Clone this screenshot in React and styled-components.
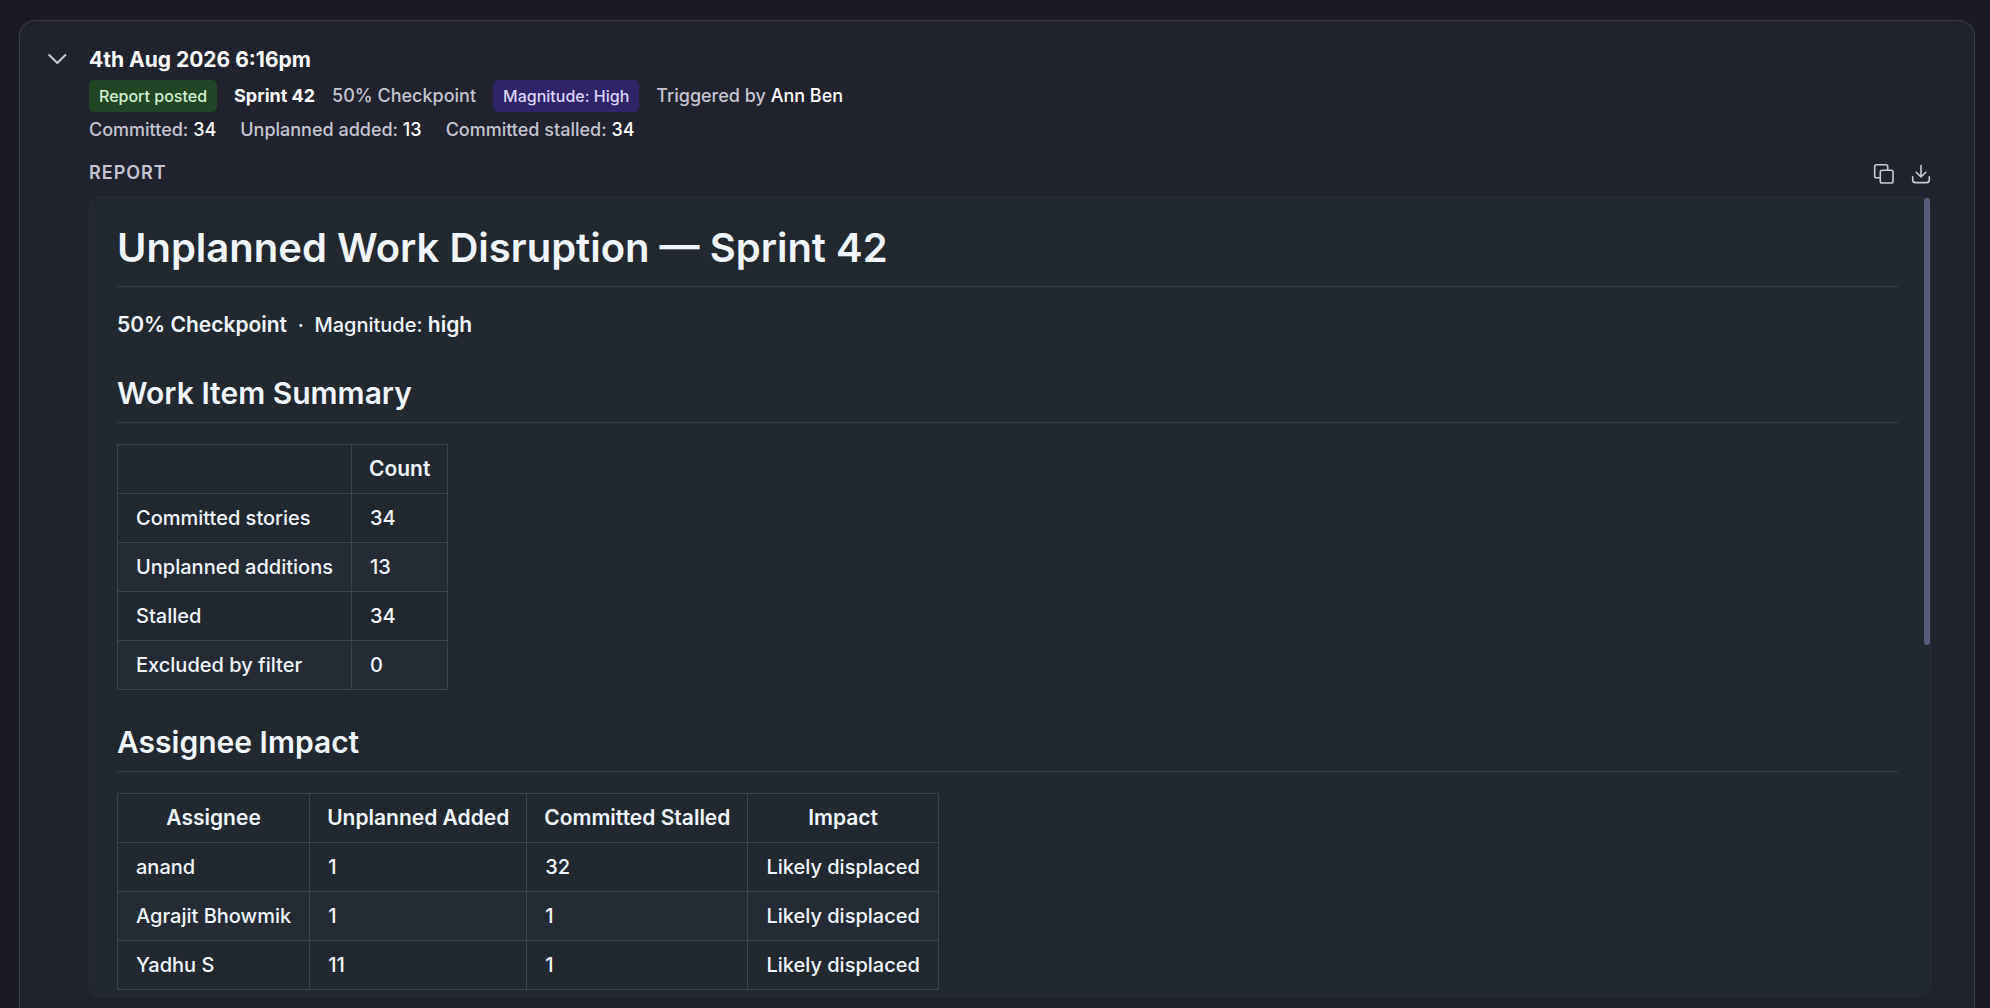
import React from 'react';
import styled, { createGlobalStyle } from 'styled-components';

const GlobalStyle = createGlobalStyle`
    * {
        box-sizing: border-box;
    }

    body {
        margin: 0;
        background-color: #1b1a23;
        font-family: Inter, sans-serif;
    }
`

const Page = styled.main`
    height: 100vh;
    overflow: hidden;
    padding: 20px 15px 0 19px;
`

const Card = styled.section`
    display: flex;
    align-items: flex-start;
    gap: 20px;
    min-height: 100%;
    padding: 24px 43px 24px 25px;
    border: 1px solid #3a3d52;
    border-bottom: none;
    border-radius: 16px 16px 0 0;
    background-color: #20222d;
`

const IconButton = styled.button`
    display: flex;
    padding: 0;
    border: none;
    background: none;
    color: #cbcad8;
    cursor: pointer;
`

const ToggleButton = styled(IconButton)`
    padding-top: 2px;
`

const Content = styled.div`
    flex: 1;
    min-width: 0;
`

const Title = styled.h3`
    margin: 0;
    color: #ffffff;
    font-size: 21px;
    font-weight: 650;
    line-height: 30px;
`

const MetaRow = styled.div`
    display: flex;
    align-items: center;
    gap: 17px;
    margin-top: 5px;
    color: #c6c6d2;
    font-size: 18px;
    font-weight: 450;
    line-height: 32px;
`

const Badge = styled.span`
    padding: 0 10px;
    border-radius: 5px;
    background-color: ${({ $tone }) => ($tone === 'green' ? '#224624' : '#2f2467')};
    color: ${({ $tone }) => ($tone === 'green' ? '#d3f2d5' : '#dcd5fb')};
    font-size: 16px;
`

const Value = styled.span`
    color: #ffffff;
    font-weight: ${({ $bold }) => ($bold ? 650 : 500)};
`

const StatRow = styled.div`
    display: flex;
    gap: 24px;
    margin-top: 1px;
    color: #c6c6d2;
    font-size: 18px;
    font-weight: 450;
    line-height: 34px;
`

const ReportHeader = styled.div`
    display: flex;
    align-items: flex-end;
    justify-content: space-between;
    margin: 13px 0 12px;
`

const ReportLabel = styled.h4`
    margin: 0;
    color: #c6c6d2;
    font-size: 18px;
    font-weight: 600;
    letter-spacing: 1px;
    line-height: 25px;
`

const Actions = styled.div`
    display: flex;
    gap: 16px;
`

const Report = styled.article`
    position: relative;
    padding: 25px 32px 6px 27px;
    border: 1px solid #292d38;
    border-radius: 10px;
    background-color: #22282f;
    color: #f0f6fc;
    font-size: 20px;
    font-weight: 450;
    line-height: 32px;
`

const ScrollThumb = styled.div`
    position: absolute;
    top: 0;
    right: 0;
    width: 6px;
    height: 56%;
    border-radius: 3px;
    background-color: #595b7c;
`

const Heading1 = styled.h1`
    margin: 0 0 22px;
    padding-bottom: 13px;
    border-bottom: 1px solid #363e48;
    font-size: 40px;
    font-weight: 625;
    line-height: 50px;
`

const Heading2 = styled.h2`
    margin: 33px 0 21px;
    padding-bottom: 10px;
    border-bottom: 1px solid #363e48;
    font-size: 30px;
    font-weight: 625;
    line-height: 38px;
`

const Paragraph = styled.p`
    margin: 0;
    white-space: pre-wrap;

    strong {
        font-size: 21px;
        font-weight: 600;
    }
`

const Table = styled.table`
    border-collapse: collapse;

    th,
    td {
        padding: 8px 18px;
        border: 1px solid #3d444d;
        text-align: left;
    }

    th {
        padding: 8px 17px;
        font-size: 21px;
        font-weight: 600;
        text-align: center;
    }

    tbody tr:nth-child(even) {
        background-color: #252b35;
    }
`

const summary = {
    columns: ['', 'Count'],
    rows: [
        ['Committed stories', '34'],
        ['Unplanned additions', '13'],
        ['Stalled', '34'],
        ['Excluded by filter', '0'],
    ],
}

const impact = {
    columns: ['Assignee', 'Unplanned Added', 'Committed Stalled', 'Impact'],
    rows: [
        ['anand', '1', '32', 'Likely displaced'],
        ['Agrajit Bhowmik', '1', '1', 'Likely displaced'],
        ['Yadhu S', '11', '1', 'Likely displaced'],
    ],
}

const ChevronIcon = () => (
    <svg width="24" height="24" viewBox="0 0 24 24" fill="none" stroke="currentColor" strokeWidth="2" strokeLinecap="round" strokeLinejoin="round">
        <path d="M4.200 8l8.100 8L20.400 8" />
    </svg>
)

const CopyIcon = () => (
    <svg width="22" height="22" viewBox="0 0 22 22" fill="none" stroke="currentColor" strokeWidth="1.600" strokeLinejoin="round">
        <rect x="7.300" y="7.300" width="12.700" height="12.700" rx="1.800" />
        <path d="M7.300 14.700H3.500a1.800 1.800 0 0 1-1.800-1.800V3.500a1.800 1.800 0 0 1 1.800-1.800h9.400a1.800 1.800 0 0 1 1.800 1.800v3.800" />
    </svg>
)

const DownloadIcon = () => (
    <svg width="20" height="22" viewBox="0 0 20 22" fill="none" stroke="currentColor" strokeWidth="1.600" strokeLinecap="round" strokeLinejoin="round">
        <path d="M10 2.500v11.500M5.200 9.300L10 14l4.800-4.700" />
        <path d="M1.700 13.700v3.300a2.600 2.600 0 0 0 2.600 2.600h11.400a2.600 2.600 0 0 0 2.600-2.600v-3.300" />
    </svg>
)

const DataTable = ({ columns, rows }) => (
    <Table>
        <thead>
            <tr>
                {columns.map((column) => <th key={column} scope="col">{column}</th>)}
            </tr>
        </thead>
        <tbody>
            {rows.map((row) => (
                <tr key={row[0]}>
                    {row.map((cell, i) => <td key={i}>{cell}</td>)}
                </tr>
            ))}
        </tbody>
    </Table>
)

const App = () => (
    <Page>
        <GlobalStyle />
        <Card>
            <ToggleButton type="button" aria-label="Collapse" aria-expanded="true">
                <ChevronIcon />
            </ToggleButton>
            <Content>
                <Title>4th Aug 2026 6:16pm</Title>
                <MetaRow>
                    <Badge $tone="green">Report posted</Badge>
                    <Value $bold>Sprint 42</Value>
                    <span>50% Checkpoint</span>
                    <Badge $tone="purple">Magnitude: High</Badge>
                    <span>Triggered by <Value>Ann Ben</Value></span>
                </MetaRow>
                <StatRow>
                    <span>Committed: <Value>34</Value></span>
                    <span>Unplanned added: <Value>13</Value></span>
                    <span>Committed stalled: <Value>34</Value></span>
                </StatRow>
                <ReportHeader>
                    <ReportLabel>REPORT</ReportLabel>
                    <Actions>
                        <IconButton type="button" aria-label="Copy report"><CopyIcon /></IconButton>
                        <IconButton type="button" aria-label="Download report"><DownloadIcon /></IconButton>
                    </Actions>
                </ReportHeader>
                <Report>
                    <ScrollThumb />
                    <Heading1>Unplanned Work Disruption — Sprint 42</Heading1>
                    <Paragraph><strong>50% Checkpoint</strong>{' \u00a0·\u00a0 '}Magnitude: <strong>high</strong></Paragraph>
                    <Heading2>Work Item Summary</Heading2>
                    <DataTable {...summary} />
                    <Heading2>Assignee Impact</Heading2>
                    <DataTable {...impact} />
                </Report>
            </Content>
        </Card>
    </Page>
)

export default App;
